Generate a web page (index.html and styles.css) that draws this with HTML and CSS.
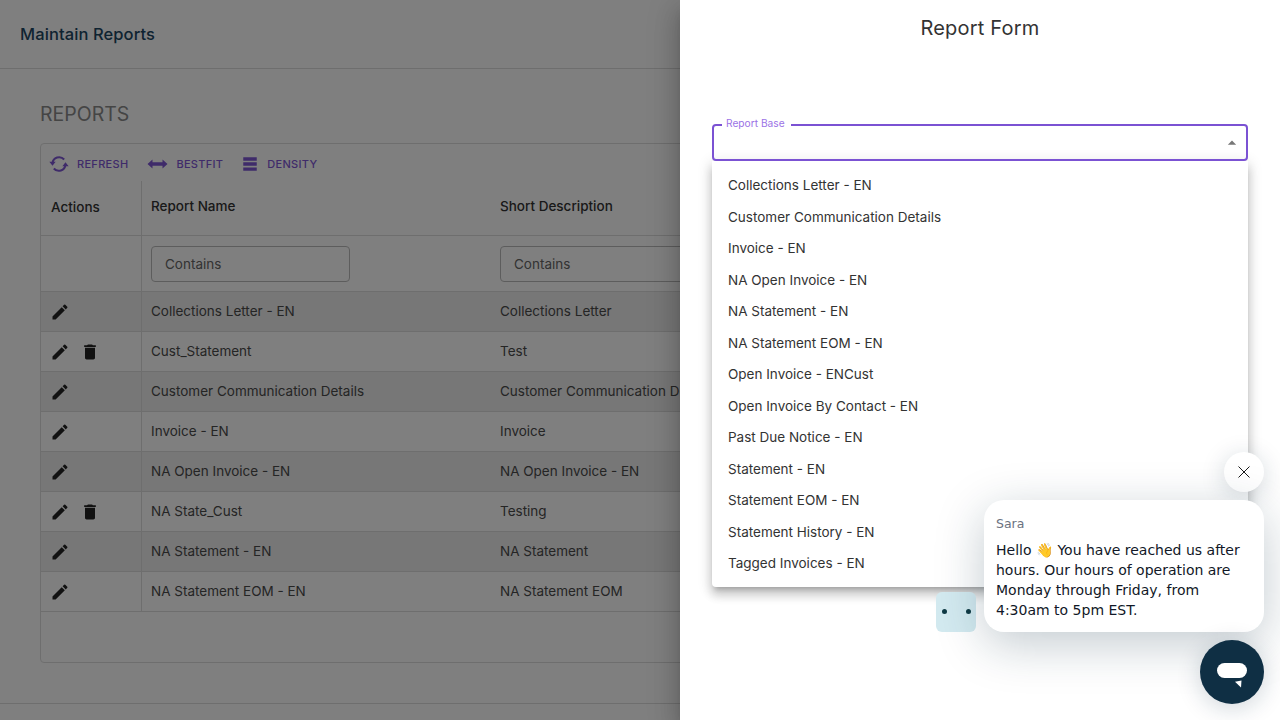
FILE: index.html
```html
<!DOCTYPE html>
<html lang="en">
<head>
<meta charset="utf-8">
<title>Maintain Reports</title>
<link rel="stylesheet" href="styles.css">
</head>
<body>
<div class="page">
  <header class="topbar"><h1 class="page-title">Maintain Reports</h1></header>
  <main class="content">
    <h2 class="section-title">REPORTS</h2>
    <section class="grid">
      <div class="toolbar">
        <button class="tool"><svg class="tool-icon" viewBox="0 0 24 24"><path d="M4.200 11.200a8 8 0 0 1 14-4.600M19.800 12.800a8 8 0 0 1-14 4.600" fill="none" stroke="currentColor" stroke-width="2.400"/><path d="M0.400 9.400h7.600L4.200 14.200zM23.600 14.600h-7.600L19.800 9.800z" fill="currentColor"/></svg>REFRESH</button>
        <button class="tool"><svg class="tool-icon wide" viewBox="0 0 24 24"><path d="M0 12l6-5.500v3.500h12V6.500l6 5.500-6 5.500V14H6v3.500z" fill="currentColor"/></svg>BESTFIT</button>
        <button class="tool"><svg class="tool-icon bars" viewBox="0 0 24 24"><path d="M3 3h18v4.500H3zM3 9.800h18v4.500H3zM3 16.500h18V21H3z" fill="currentColor"/></svg>DENSITY</button>
      </div>
      <div class="row head">
        <div class="cell actions"><span class="head-actions">Actions</span></div>
        <div class="cell name">Report Name</div>
        <div class="cell desc">Short Description</div>
      </div>
      <div class="row filter">
        <div class="cell actions"></div>
        <div class="cell name"><div class="filter-box">Contains</div></div>
        <div class="cell desc"><div class="filter-box">Contains</div></div>
      </div>
      <div class="row odd"><div class="cell actions"><svg class="act" viewBox="0 0 24 24"><path d="M3 17.250V21h3.750L17.810 9.940l-3.750-3.750L3 17.250zM20.710 7.040a1 1 0 0 0 0-1.410l-2.340-2.340a1 1 0 0 0-1.410 0l-1.830 1.830 3.750 3.750 1.830-1.830z"/></svg></div><div class="cell name">Collections Letter - EN</div><div class="cell desc">Collections Letter</div></div>
      <div class="row"><div class="cell actions"><svg class="act" viewBox="0 0 24 24"><path d="M3 17.250V21h3.750L17.810 9.940l-3.750-3.750L3 17.250zM20.710 7.040a1 1 0 0 0 0-1.410l-2.340-2.340a1 1 0 0 0-1.410 0l-1.830 1.830 3.750 3.750 1.830-1.830z"/></svg><svg class="act" viewBox="0 0 24 24"><path d="M6 19c0 1.100.9 2 2 2h8c1.100 0 2-.9 2-2V7H6v12zM19 4h-3.500l-1-1h-5l-1 1H5v2h14V4z"/></svg></div><div class="cell name">Cust_Statement</div><div class="cell desc">Test</div></div>
      <div class="row odd"><div class="cell actions"><svg class="act" viewBox="0 0 24 24"><path d="M3 17.250V21h3.750L17.810 9.940l-3.750-3.750L3 17.250zM20.710 7.040a1 1 0 0 0 0-1.410l-2.340-2.340a1 1 0 0 0-1.410 0l-1.830 1.830 3.750 3.750 1.830-1.830z"/></svg></div><div class="cell name">Customer Communication Details</div><div class="cell desc">Customer Communication Details</div></div>
      <div class="row"><div class="cell actions"><svg class="act" viewBox="0 0 24 24"><path d="M3 17.250V21h3.750L17.810 9.940l-3.750-3.750L3 17.250zM20.710 7.040a1 1 0 0 0 0-1.410l-2.340-2.340a1 1 0 0 0-1.410 0l-1.830 1.830 3.750 3.750 1.830-1.830z"/></svg></div><div class="cell name">Invoice - EN</div><div class="cell desc">Invoice</div></div>
      <div class="row odd"><div class="cell actions"><svg class="act" viewBox="0 0 24 24"><path d="M3 17.250V21h3.750L17.810 9.940l-3.750-3.750L3 17.250zM20.710 7.040a1 1 0 0 0 0-1.410l-2.340-2.340a1 1 0 0 0-1.410 0l-1.830 1.830 3.750 3.750 1.830-1.830z"/></svg></div><div class="cell name">NA Open Invoice - EN</div><div class="cell desc">NA Open Invoice - EN</div></div>
      <div class="row"><div class="cell actions"><svg class="act" viewBox="0 0 24 24"><path d="M3 17.250V21h3.750L17.810 9.940l-3.750-3.750L3 17.250zM20.710 7.040a1 1 0 0 0 0-1.410l-2.340-2.340a1 1 0 0 0-1.410 0l-1.830 1.830 3.750 3.750 1.830-1.830z"/></svg><svg class="act" viewBox="0 0 24 24"><path d="M6 19c0 1.100.9 2 2 2h8c1.100 0 2-.9 2-2V7H6v12zM19 4h-3.500l-1-1h-5l-1 1H5v2h14V4z"/></svg></div><div class="cell name">NA State_Cust</div><div class="cell desc">Testing</div></div>
      <div class="row odd"><div class="cell actions"><svg class="act" viewBox="0 0 24 24"><path d="M3 17.250V21h3.750L17.810 9.940l-3.750-3.750L3 17.250zM20.710 7.040a1 1 0 0 0 0-1.410l-2.340-2.340a1 1 0 0 0-1.410 0l-1.830 1.830 3.750 3.750 1.830-1.830z"/></svg></div><div class="cell name">NA Statement - EN</div><div class="cell desc">NA Statement</div></div>
      <div class="row"><div class="cell actions"><svg class="act" viewBox="0 0 24 24"><path d="M3 17.250V21h3.750L17.810 9.940l-3.750-3.750L3 17.250zM20.710 7.040a1 1 0 0 0 0-1.410l-2.340-2.340a1 1 0 0 0-1.410 0l-1.830 1.830 3.750 3.750 1.830-1.830z"/></svg></div><div class="cell name">NA Statement EOM - EN</div><div class="cell desc">NA Statement EOM</div></div>
    </section>
  </main>
  <footer class="page-footer"></footer>
</div>
<div class="scrim"></div>
<aside class="drawer">
  <h2 class="drawer-title">Report Form</h2>
  <div class="field">
    <span class="field-label">Report Base</span>
    <svg class="caret" viewBox="0 0 24 24"><path d="M7 14l5-5 5 5z"/></svg>
  </div>
  <ul class="menu">
    <li>Collections Letter - EN</li>
    <li>Customer Communication Details</li>
    <li>Invoice - EN</li>
    <li>NA Open Invoice - EN</li>
    <li>NA Statement - EN</li>
    <li>NA Statement EOM - EN</li>
    <li>Open Invoice - ENCust</li>
    <li>Open Invoice By Contact - EN</li>
    <li>Past Due Notice - EN</li>
    <li>Statement - EN</li>
    <li>Statement EOM - EN</li>
    <li>Statement History - EN</li>
    <li>Tagged Invoices - EN</li>
  </ul>
</aside>
<div class="typing"><i></i><i></i></div>
<div class="chat-close"><svg viewBox="0 0 16 16"><path d="M2.500 2.500l11 11M13.500 2.500l-11 11" fill="none" stroke="#1a1a1a" stroke-width="1"/></svg></div>
<div class="chat-bubble">
  <div class="chat-name">Sara</div>
  <p class="chat-text">Hello 👋 You have reached us after hours. Our hours of operation are Monday through Friday, from 4:30am to 5pm EST.</p>
</div>
<div class="chat-launcher"><svg viewBox="0 0 32 32"><rect x="1" y="7" width="30" height="15" rx="7.500" fill="#fff"/><path d="M19 25.800l6.500-1.400-.5 7z" fill="#fff"/></svg></div>
</body>
</html>
```
FILE: styles.css
```css
* { box-sizing: border-box; }
html, body { margin: 0; height: 720px; overflow: hidden; }
body { font-family: Inter, "Open Sans", sans-serif; background: #fff; color: #3a3a3a; }

.page { width: 1280px; height: 720px; display: flex; flex-direction: column; background: #fff; }
.topbar { height: 69px; flex: none; display: flex; align-items: center; padding-left: 20px; border-bottom: 1px solid #ddd; }
.page-title { margin: 0; font-size: 16.500px; font-weight: 500; color: #1c4662; letter-spacing: .1px; }
.content { flex: none; height: 635px; padding: 33px 0 0 40px; border-bottom: 1px solid #ddd; }
.section-title { margin: 0 0 17px; font-size: 19.500px; line-height: 24px; font-weight: 400; color: #8a8a8a; }

.grid { width: 1200px; height: 520px; border: 1px solid #ddd; border-radius: 4px; }
.toolbar { height: 37px; display: flex; align-items: center; gap: 19px; padding-left: 8px; }
.tool { display: flex; align-items: center; padding: 2px 0 0; border: 0; background: none; color: #7e57d4; font: 500 11px Inter, sans-serif; letter-spacing: .3px; }
.tool-icon { width: 20px; height: 20px; margin-right: 8px; }
.tool-icon.wide { width: 21px; margin-right: 8px; }
.tool-icon.bars { width: 18px; margin-right: 8px; margin-left: -1px; }

.row { display: flex; height: 40px; border-bottom: 1px solid #ddd; font-size: 13.500px; color: #4a4a4a; }
.row.odd { background: #eee; }
.row.head { height: 55px; color: #333; font-weight: 500; }
.row.filter { height: 56px; }
.cell { display: flex; align-items: center; }
.cell.actions { width: 101px; flex: none; padding-left: 9px; gap: 10px; border-right: 1px solid #ddd; }
.cell.name { width: 358px; flex: none; padding: 0 0 2px 9px; }
.cell.desc { flex: 1; padding-bottom: 2px; }
.row.head .cell.name, .row.head .cell.desc { padding-bottom: 4px; }
.row.filter .cell.name, .row.filter .cell.desc { padding-bottom: 0; }
.head-actions { position: relative; top: -1px; margin-left: 1px; }
.act { width: 20px; height: 20px; fill: #222; }
.filter-box { width: 199px; height: 36px; display: flex; align-items: center; padding-left: 13px; border: 1px solid #bbb; border-radius: 4px; color: #666; }
.desc .filter-box { width: 300px; }

.scrim { position: absolute; inset: 0; background: rgba(0,0,0,.5); }

.drawer { position: absolute; top: 0; right: 0; width: 600px; height: 720px; padding: 0 32px; background: #fff;
  box-shadow: 0 8px 10px -5px rgba(0,0,0,.2), 0 16px 24px 2px rgba(0,0,0,.14), 0 6px 30px 5px rgba(0,0,0,.12); }
.drawer-title { margin: 0; padding: 16px 0 0; height: 124px; text-align: center; font-size: 20px; line-height: 24px; font-weight: 400; color: #333; letter-spacing: .2px; }
.field { position: relative; height: 37px; border: 2px solid #7b52d3; border-radius: 4px; }
.field-label { position: absolute; top: -9px; left: 8px; padding: 0 6px 0 4px; background: #fff; font-size: 10.200px; line-height: 12px; color: #9b72e6; }
.caret { position: absolute; right: 4px; top: 7px; width: 20px; height: 20px; fill: #777; }
.menu { margin: 0; padding: 9px 0 7px; list-style: none; background: #fff; border-radius: 0 0 4px 4px;
  box-shadow: 0 5px 5px -3px rgba(0,0,0,.2), 0 8px 10px 1px rgba(0,0,0,.14), 0 3px 14px 2px rgba(0,0,0,.12); }
.menu li { height: 31.500px; line-height: 31.500px; padding-left: 16px; font-size: 13.500px; color: #333; }

.typing { position: absolute; left: 936px; top: 592px; width: 40px; height: 40px; display: flex; align-items: center; justify-content: space-between; padding: 0 5.500px 2px; background: #d3eaf0; border-radius: 6px; }
.typing i { width: 5px; height: 5px; border-radius: 50%; background: #0f3a44; }
.chat-close { position: absolute; left: 1224px; top: 452px; width: 40px; height: 40px; display: flex; align-items: center; justify-content: center; background: #fff; border-radius: 50%; box-shadow: 0 4px 24px rgba(15,47,68,.18); }
.chat-close svg { width: 16px; height: 16px; }
.chat-bubble { position: absolute; left: 984px; top: 500px; width: 280px; height: 132px; padding: 14px 12px; background: #fff; border-radius: 20px; box-shadow: 0 12px 48px rgba(15,47,68,.25); font-family: "DejaVu Sans", sans-serif; }
.chat-name { font-size: 12.500px; line-height: 20px; color: #6b7280; }
.chat-text { margin: 6px 0 0; font-size: 14px; line-height: 20px; color: #111827; }
.chat-launcher { position: absolute; left: 1200px; top: 640px; width: 64px; height: 64px; display: flex; align-items: center; justify-content: center; background: #0f2f44; border-radius: 50%; box-shadow: 0 4px 24px rgba(15,47,68,.2); }
.chat-launcher svg { width: 32px; height: 32px; }
```
